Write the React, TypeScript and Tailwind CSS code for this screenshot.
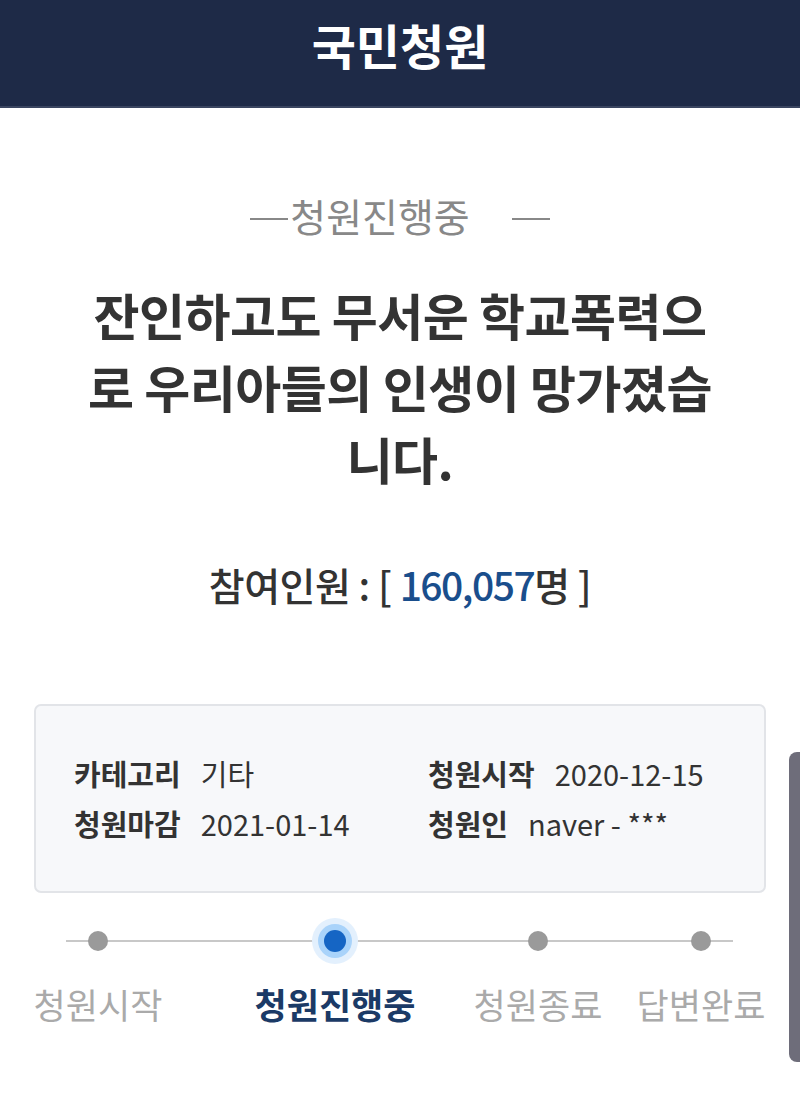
import React from 'react';

const steps = [
  { label: '청원시작', active: false, w: 'w-[196px]' },
  { label: '청원진행중', active: true, w: 'w-[278px]' },
  { label: '청원종료', active: false, w: 'w-[128px]' },
  { label: '답변완료', active: false, w: 'w-[198px]' },
];

const InfoItem: React.FC<{ label: string; value: string }> = ({ label, value }) => (
  <div className="flex items-baseline whitespace-nowrap">
    <span className="font-bold text-[#333]">{label}</span>
    <span className="ml-[20px] text-[#333]">{value}</span>
  </div>
);

export default function App() {
  return (
    <div className="relative min-h-[1108px] bg-white overflow-hidden" style={{ fontFamily: '"Noto Sans CJK KR", "Noto Sans", sans-serif' }}>
      {/* header */}
      <header className="h-[108px] bg-[#1e2a47] border-b-2 border-[#3a4560] flex items-start justify-center pt-[12px]">
        <h1 className="text-white text-[48px] font-bold leading-[64px]">국민청원</h1>
      </header>

      <main className="flex flex-col items-center">
        {/* status */}
        <div className="mt-[80px] flex items-center text-[#888] text-[39px] leading-[54px]">
          <span className="mt-[8px] mr-[2px] w-[38px] h-[2px] bg-[#888]" />
          <span>청원진행중</span>
          <span className="mt-[8px] ml-[42px] w-[38px] h-[2px] bg-[#888]" />
        </div>

        {/* title */}
        <h2 className="mt-[36px] text-center text-[#333] text-[50px] font-bold leading-[72px] tracking-[-0.5px]">
          잔인하고도 무서운 학교폭력으<br />
          로 우리아들의 인생이 망가졌습<br />
          니다.
        </h2>

        {/* participants */}
        <div className="mt-[62px] text-[#333] text-[39px] leading-[56px] font-medium tracking-[-0.5px]">
          참여인원 : [ <span className="text-[#1a4e8c] tracking-[-1.5px]">160,057</span>명 ]
        </div>
      </main>

      {/* info card */}
      <section className="mx-[34px] mt-[92px] h-[189px] rounded-[7px] border-2 border-[#e2e4e8] bg-[#f7f8fa] pl-[38px] pt-[42px] text-[29px] leading-[50px]">
        <div className="grid grid-cols-[354px_1fr]">
          <InfoItem label="카테고리" value="기타" />
          <InfoItem label="청원시작" value="2020-12-15" />
          <InfoItem label="청원마감" value="2021-01-14" />
          <InfoItem label="청원인" value="naver - ***" />
        </div>
      </section>

      {/* progress */}
      <section className="relative mt-[36px]">
        <div className="absolute left-[66px] right-[67px] top-[11px] h-[2px] bg-[#c8c8c8]" />
        <div className="relative flex">
          {steps.map((s) => (
            <div key={s.label} className={`${s.w} flex flex-col items-center`}>
              <div className="h-[24px] flex items-center justify-center">
                {s.active ? (
                  <div className="relative w-[22px] h-[22px]">
                    <div className="absolute -inset-[12px] rounded-full bg-[#e3f0fd]" />
                    <div className="absolute -inset-[6px] rounded-full bg-[#a9d3fa]" />
                    <div className="absolute inset-0 rounded-full bg-[#1565c4]" />
                  </div>
                ) : (
                  <div className="w-[20px] h-[20px] rounded-full bg-[#9a9a9a]" />
                )}
              </div>
              <span
                className={`mt-[26px] whitespace-nowrap text-[35px] leading-[50px] ${
                  s.active ? 'font-bold text-[#1b3a66]' : 'text-[#aaa]'
                }`}
              >
                {s.label}
              </span>
            </div>
          ))}
        </div>
      </section>

      {/* scroll handle overlay */}
      <div className="absolute right-0 top-[752px] w-[11px] h-[310px] rounded-l-[8px] bg-[#6e6d7a]" />
    </div>
  );
}
